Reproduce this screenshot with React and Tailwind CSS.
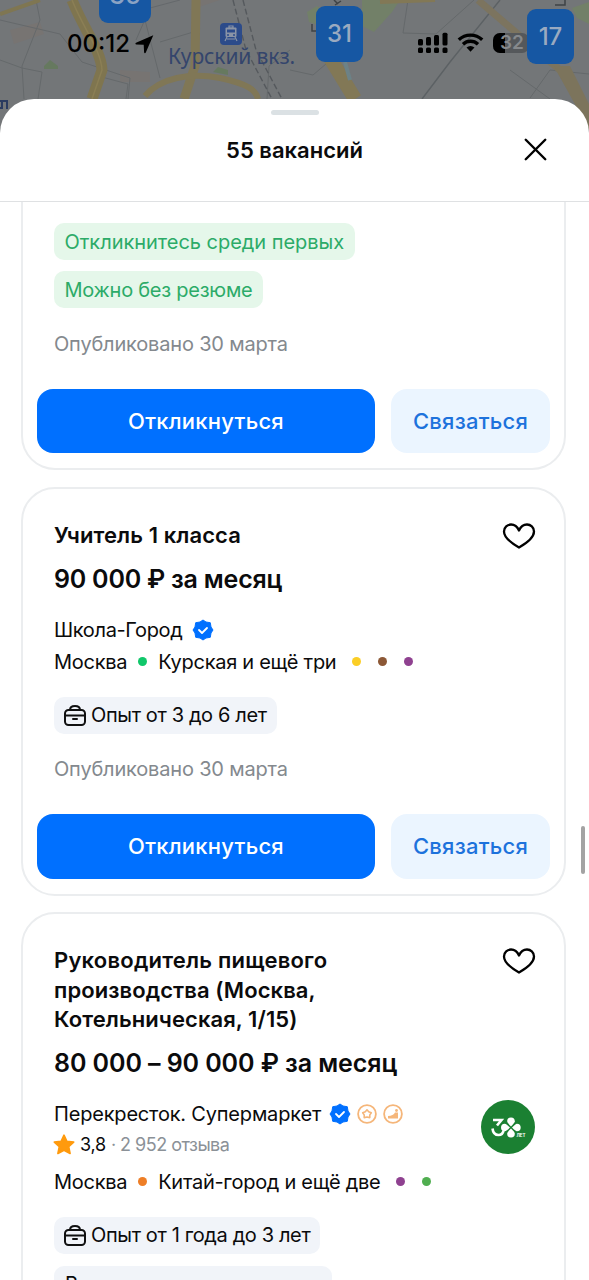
import { X } from "lucide-react";

function MapBackdrop() {
  return (
    <svg className="absolute inset-0" width="589" height="140" viewBox="0 0 589 140" fill="none">
      <rect width="589" height="140" fill="#737678" />
      {/* Parks */}
      <path d="M307 12l10-6 8 6-4 14-12-4zM362 0h38l-8 12-18 20-12-6zM572 8l17-6v22l-12-6z" fill="#728068" />
      <path d="M44 66l6-6 8 6v3H44zM213 72l5-5 10 3v5z" fill="#66795f" />
      <path d="M190 10l30-10h-20zM10 30l30-8 4 12-30 10zM120 70l30 2v10h-30z" fill="#777472" />
      {/* Side streets */}
      <g stroke="#65696b" strokeWidth="1">
        <path d="M0 20L60 34L82 62L130 78L128 99" />
        <path d="M22 66L40 20L36 0M22 66L24 99M0 60L22 68L42 72L38 99" />
        <path d="M98 76L128 84L126 99M136 40L150 8L180 0M145 20L160 78M160 42L200 30" />
        <path d="M267 99L269 66L290 50" />
        <path d="M313 75L290 70M313 75L340 52M408 0L403 33L436 34L474 0M510 70L550 99M530 98L550 70L589 74" />
        <path d="M422 99L450 62L500 0" stroke="#5c6164" strokeWidth="1.4" />
      </g>
      {/* Main roads */}
      <path d="M72 0C84 30 101 50 102 70L92 99" stroke="#7f754f" strokeWidth="11" />
      <path d="M72 0C84 30 101 50 102 70L92 99" stroke="#8b7f55" strokeWidth="1.5" />
      <path d="M0 14L40 0" stroke="#7f7652" strokeWidth="4" />
      <path d="M196 0L195 66L184 99" stroke="#807756" strokeWidth="9" />
      <path d="M145 96C160 78 190 72 220 78C248 84 256 90 258 99" stroke="#807756" strokeWidth="6" />
      <path d="M330 58L355 99" stroke="#827856" strokeWidth="14" />
      <path d="M478 0L520 36L560 70L589 120" stroke="#7c745f" strokeWidth="7" />
      <path d="M554 66L570 66L589 104V130z" fill="#7c745c" />
      <path d="M380 2L435 0" stroke="#827856" strokeWidth="4" />
      <path d="M345 62l5 18" stroke="#6c8287" strokeWidth="4" />
      {/* Railway */}
      <g stroke="#55595d" strokeWidth="1.4" strokeDasharray="6 3">
        <path d="M233 0L246 50L272 99" />
        <path d="M243 0L256 50L282 99" />
      </g>
      <path d="M334 0l4 4M335 5l6-4M555 5h10v-5M312 24v7h5" stroke="#3f4346" strokeWidth="1.5" />
      <path d="M0 101h7v8M2 101v7H0" stroke="#2b3c60" strokeWidth="2" />
    </svg>
  );
}

function StationIcon() {
  return (
    <svg width="22" height="22" viewBox="0 0 22 22" fill="none">
      <rect width="22" height="22" rx="4" fill="#2c4b8a" />
      <path d="M6.500 4.500h9a1 1 0 011 1V13a1 1 0 01-1 1h-9a1 1 0 01-1-1V5.500a1 1 0 011-1z" fill="#8a94a6" />
      <path d="M9 3h4v2H9zM7 14l-2 4M15 14l2 4M7 16h8" stroke="#8a94a6" strokeWidth="1.200" />
      <path d="M7 6.500h8v3H7z" fill="#2c4b8a" />
      <circle cx="8" cy="12" r="1" fill="#2c4b8a" />
      <circle cx="14" cy="12" r="1" fill="#2c4b8a" />
    </svg>
  );
}

function StatusBar() {
  return (
    <>
      <div className="absolute left-[67px] top-[30px] flex h-7 items-center gap-[5px] text-black">
        <span className="text-[24px] font-medium leading-7">00:12</span>
        <svg width="20" height="20" viewBox="0 0 20 20">
          <path d="M18.300 1.200L1 8.700c-.9.500-.7 1.600.3 1.700l7.400.4.400 7.500c.1 1 1.200 1.200 1.700.3z" fill="#000" />
        </svg>
      </div>
      <svg className="absolute left-[418px] top-[32px]" width="30" height="22" viewBox="0 0 30 22">
        <rect x="0" y="7" width="5" height="6.500" rx="1.500" />
        <rect x="8" y="5" width="5" height="8.500" rx="1.500" />
        <rect x="16" y="3" width="5" height="10.500" rx="1.500" />
        <rect x="24.500" y="0.800" width="5" height="12.700" rx="1.500" />
        <rect x="0" y="15.500" width="5" height="5.500" rx="1.500" />
        <rect x="8" y="15.500" width="5" height="5.500" rx="1.500" />
        <rect x="16" y="15.500" width="5" height="5.500" rx="1.500" />
        <rect x="24.500" y="15.500" width="5" height="5.500" rx="1.500" />
      </svg>
      <svg className="absolute left-[457px] top-[33px]" width="27" height="20" viewBox="0 0 27 20" fill="none">
        <path d="M1.800 6.800a17 17 0 0123.400 0M6 11.200a11 11 0 0115 0" stroke="#000" strokeWidth="3.400" />
        <path d="M13.500 18.800l-4-4.200a6 6 0 018 0z" fill="#000" />
      </svg>
      <div className="absolute left-[493px] top-[33px] flex h-5 w-[36px] items-center justify-center overflow-hidden rounded-[7px] bg-[#55585b]">
        <div className="absolute left-0 top-0 h-5 w-3 bg-black" />
        <span className="relative left-px text-[19px] font-semibold leading-5 text-[#86898c]">32</span>
      </div>
    </>
  );
}

function Verified() {
  return (
    <svg width="22" height="22" viewBox="0 0 22 22" fill="none">
      <path
        d="M11 1L14 3L18.300 3.700L19 8L21 11L19 14L18.300 18.300L14 19L11 21L8 19L3.700 18.300L3 14L1 11L3 8L3.700 3.700L8 3z"
        fill="#0070ff"
        stroke="#0070ff"
        strokeLinejoin="round"
      />
      <path d="M7 11l3 3 5-5" stroke="#fff" strokeWidth="1.800" strokeLinecap="round" strokeLinejoin="round" />
    </svg>
  );
}

function AwardBadges() {
  return (
    <>
      <svg width="20" height="20" viewBox="0 0 20 20" fill="none" stroke="#f5b67a">
        <circle cx="10" cy="10" r="8.900" strokeWidth="1.800" />
        <path d="M10 5.800l1.700 1.900 2.600 1-1.500 2.200v2.700l-2.800-.6-2.800.6v-2.700l-1.500-2.200 2.600-1z" strokeWidth="1.600" strokeLinejoin="round" />
      </svg>
      <svg width="20" height="20" viewBox="0 0 20 20" fill="none">
        <circle cx="10" cy="10" r="8.900" stroke="#f5b67a" strokeWidth="1.800" />
        <path d="M5 14.500v-2.500c3.500 0 6-1.200 7-3.500h3v6z" fill="#f5b67a" />
        <circle cx="13.500" cy="6.500" r="1.400" fill="#f5b67a" />
      </svg>
    </>
  );
}

function Briefcase() {
  return (
    <svg width="22" height="21" viewBox="0 0 22 21" fill="none" stroke="#111" strokeWidth="2" strokeLinecap="round">
      <rect x="1" y="5" width="20" height="15" rx="3.500" />
      <path d="M6 5c0-2.500 2-4 5-4s5 1.500 5 4M1.500 10.500h19M9 14h4" />
    </svg>
  );
}

function Star() {
  return (
    <svg className="-ml-px" width="22" height="21" viewBox="0 0 22 21">
      <path
        d="M11 1.200l2.900 6.100 6.800.8-5 4.500 1.400 6.900L11 16.200l-6.100 3.300 1.400-6.900-5-4.500 6.800-.8z"
        fill="#ff9a0d"
        stroke="#ff9a0d"
        strokeWidth="1.600"
        strokeLinejoin="round"
      />
    </svg>
  );
}

function CompanyLogo() {
  return (
    <svg className="mr-px" width="54" height="54" viewBox="0 0 54 54" fill="none">
      <circle cx="27" cy="27" r="27" fill="#1b8032" />
      <path d="M12 20h8.500l-4.500 5.500" stroke="#fff" strokeWidth="2.600" />
      <path d="M11.500 28.500c.5 4.500 3 6.500 6 6.500 2.500 0 4.500-1.500 5-4.500" stroke="#fff" strokeWidth="2.600" />
      <g fill="#fff">
        <path d="M30 26.500c-2.500-2.500-3.800-4-3.800-5.200a3.800 3.800 0 017.600 0c0 1.200-1.300 2.700-3.800 5.200z" />
        <path d="M30 28.500c-2.500 2.500-3.800 4-3.800 5.200a3.800 3.800 0 007.600 0c0-1.200-1.300-2.700-3.800-5.200z" />
        <path d="M29 27.500c-2.500-2.500-4-3.800-5.200-3.800a3.800 3.800 0 000 7.600c1.200 0 2.700-1.300 5.200-3.800z" />
        <path d="M31 27.500c2.500-2.500 4-3.800 4.900-3.800a3.800 3.800 0 010 7.600c-.9 0-2.400-1.300-4.900-3.800z" />
      </g>
      <text x="35.500" y="36.500" fill="#fff" fontSize="4.500" fontWeight="700" textLength="9">ЛЕТ</text>
    </svg>
  );
}

function Dot({ className }) {
  return <span className={`h-[9px] w-[9px] shrink-0 rounded-full ${className}`} />;
}

function Card({ className, children }) {
  return (
    <article className={`ml-[21px] w-[545px] border-2 border-[#ebedef] px-[14px] ${className}`}>
      {children}
    </article>
  );
}

function Title({ children }) {
  return (
    <div className="flex items-start justify-between">
      <h2 className="whitespace-nowrap text-[22px] font-semibold leading-[29.5px] tracking-[0.08px]">{children}</h2>
      <svg className="mt-[2px]" width="34" height="26" viewBox="0 0 34 26" fill="none">
        <path
          d="M17 24.500C10 20.500 2 14.500 2 8.500C2 4 5.500 1.500 9 1.500C12.500 1.500 15.500 4 17 7.500C18.500 4 21.500 1.500 25 1.500C28.500 1.500 32 4 32 8.500C32 14.500 24 20.500 17 24.500z"
          stroke="#000"
          strokeWidth="2.300"
          strokeLinejoin="round"
        />
      </svg>
    </div>
  );
}

function Salary({ className, children }) {
  return <p className={`mt-[11px] whitespace-nowrap text-[25px] font-semibold leading-[34px] ${className}`}>{children}</p>;
}

function GreenChip({ className, children }) {
  return (
    <span className={`flex h-[37px] items-center whitespace-nowrap rounded-[10px] bg-[#e5f7ea] px-[10.5px] text-[20px] text-[#2cab68] ${className}`}>
      {children}
    </span>
  );
}

function Experience({ children }) {
  return (
    <span className="flex h-[37px] w-fit items-center gap-[5px] whitespace-nowrap rounded-[10px] bg-[#f1f4f9] px-[10px] text-[20px] tracking-[-0.37px]">
      <Briefcase />
      {children}
    </span>
  );
}

function Published({ className }) {
  return (
    <p className={`whitespace-nowrap text-[20px] leading-6 tracking-[-0.18px] text-[#84898e] ${className}`}>
      Опубликовано 30 марта
    </p>
  );
}

function Actions({ className }) {
  return (
    <div className={`flex gap-4 text-[22px] font-medium tracking-[0.25px] ${className}`}>
      <button className="h-full w-[338px] rounded-[16px] bg-[#0070ff] text-white">Откликнуться</button>
      <button className="h-full w-[159px] rounded-[16px] bg-[#ebf5ff] text-[#1d72dc]">Связаться</button>
    </div>
  );
}

export default function App() {
  return (
    <div className="relative h-[1280px] w-[589px] overflow-hidden bg-[#737678] font-['Inter','Noto_Sans',sans-serif] text-[#0b0b0c]">
      <MapBackdrop />
      {/* Map pins */}
      <div className="absolute left-[99px] top-[-32px] flex h-[55px] w-[52px] items-end justify-center rounded-[9px] bg-[#1657a3] pb-[14px] text-[25px] font-medium leading-7 text-[#8ba3c4]">36</div>
      <div className="absolute left-[316px] top-[6px] flex h-[56px] w-[47px] items-center justify-center rounded-[9px] bg-[#1657a3] text-[24px] font-medium text-[#9aaac0]">31</div>
      <div className="absolute left-[220px] top-[23px]"><StationIcon /></div>
      <div className="absolute left-[168px] top-[44px] whitespace-nowrap font-['Noto_Sans'] text-[21px] leading-6 tracking-[-0.1px] text-[#34456c]">Курский вкз.</div>
      <StatusBar />
      <div className="absolute left-[527px] top-[9px] flex h-[55px] w-[47px] items-center justify-center rounded-[9px] bg-[#1657a3] text-[24px] font-medium text-[#9aaac0]">17</div>

      <div className="relative mt-[99px] flex h-[1181px] flex-col rounded-t-[34px] bg-white">
        <header className="flex h-[103px] shrink-0 flex-col items-center border-b border-[#dfe1e3]">
          <div className="mt-[11px] h-[5px] w-12 rounded-full bg-[#dbe1e4]" />
          <div className="mt-[15px] grid w-full grid-cols-[1fr_auto_1fr] items-center">
            <h1 className="col-start-2 text-[22px] font-semibold leading-[30px]">55 вакансий</h1>
            <button className="mr-[34px] justify-self-end"><X size={39} strokeWidth={1.5} color="#000" /></button>
          </div>
        </header>

        <main className="min-h-0 flex-1 overflow-hidden">
          <Card className="h-[268px] rounded-b-[34px] border-t-0 pt-[21px]">
            <div className="ml-[17px] flex flex-col items-start gap-[11px]">
              <GreenChip className="tracking-[-0.03px]">Откликнитесь среди первых</GreenChip>
              <GreenChip className="tracking-[-0.25px]">Можно без резюме</GreenChip>
            </div>
            <Published className="ml-[17px] mt-[24px]" />
            <Actions className="mt-[33px] h-16" />
          </Card>

          <Card className="mt-[17px] h-[409px] rounded-[34px] pt-[32px]">
            <div className="ml-[17px] mr-[14px]">
              <Title>Учитель 1 класса</Title>
              <Salary className="tracking-[-0.22px]">90 000 ₽ за месяц</Salary>
              <div className="mt-[22px] flex h-6 items-center gap-[10px] whitespace-nowrap text-[20px] leading-6 tracking-[-0.35px]">
                Школа-Город
                <Verified />
              </div>
              <div className="mt-2 flex h-6 items-center whitespace-nowrap text-[20px] leading-6 tracking-[-0.28px]">
                Москва
                <Dot className="ml-[11px] mr-[11px] bg-[#10c76a]" />
                Курская и ещё три
                <span className="ml-4 flex gap-[17px]">
                  <Dot className="bg-[#fbce26]" />
                  <Dot className="bg-[#8c5836]" />
                  <Dot className="bg-[#8f4190]" />
                </span>
              </div>
              <div className="mt-[23px]">
                <Experience>Опыт от 3 до 6 лет</Experience>
              </div>
              <Published className="mt-[23px]" />
            </div>
            <Actions className="mt-[33px] h-[65px]" />
          </Card>

          <Card className="mt-[16px] h-[500px] rounded-t-[34px] pt-[32px]">
            <div className="ml-[17px] mr-[14px]">
              <Title>
                <span className="tracking-[0.22px]">Руководитель пищевого</span>
                <br />
                производства (Москва,
                <br />
                Котельническая, 1/15)
              </Title>
              <Salary className="tracking-[-0.08px]">80 000 – 90 000 ₽ за месяц</Salary>
              <div className="mt-[20px] flex items-start justify-between">
                <div>
                  <div className="mt-[2px] flex h-6 items-center whitespace-nowrap text-[20px] leading-6 tracking-[-0.19px]">
                    Перекресток. Супермаркет
                    <span className="ml-2 flex items-center gap-[6px]">
                      <Verified />
                      <AwardBadges />
                    </span>
                  </div>
                  <div className="mt-[7px] flex h-6 items-center gap-[5px] whitespace-nowrap text-[18px] leading-6 tracking-[-0.25px]">
                    <Star />
                    <span>3,8</span>
                    <span className="tracking-[-0.52px] text-[#8b9197]">· 2 952 отзыва</span>
                  </div>
                </div>
                <CompanyLogo />
              </div>
              <div className="mt-[13px] flex h-6 items-center whitespace-nowrap text-[20px] leading-6 tracking-[-0.28px]">
                Москва
                <Dot className="ml-[11px] mr-[11px] bg-[#ee7e26]" />
                Китай-город и ещё две
                <span className="ml-4 flex gap-[17px]">
                  <Dot className="bg-[#8f4190]" />
                  <Dot className="bg-[#50ae50]" />
                </span>
              </div>
              <div className="mt-[23px] flex flex-col items-start gap-[12px]">
                <Experience>Опыт от 1 года до 3 лет</Experience>
                <span className="flex h-[37px] w-[278px] items-center whitespace-nowrap rounded-[10px] bg-[#f1f4f9] px-[11px] text-[20px]">
                  Выплаты: два раза в месяц
                </span>
              </div>
            </div>
          </Card>
        </main>
        <div className="absolute right-[4px] top-[727px] h-[48px] w-[4px] rounded-full bg-[#a3a3a3]" />
      </div>
    </div>
  );
}
